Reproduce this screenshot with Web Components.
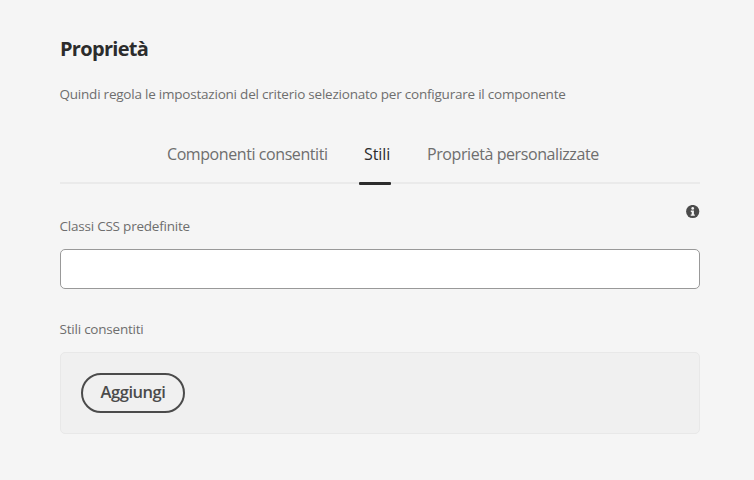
<!DOCTYPE html>
<html lang="it"><head><meta charset="utf-8"><title>Proprietà</title>
<style>html,body{margin:0;background:#f5f5f5}body{font-family:"Open Sans","Noto Sans",sans-serif;color:#6e6e6e}</style></head>
<body>
<policy-panel>
  <span slot="title">Proprietà</span>
  <span slot="description">Quindi regola le impostazioni del criterio selezionato per configurare il componente</span>
  <tab-bar slot="tabs">
    <tab-item style="--w:161px">Componenti consentiti</tab-item>
    <tab-item selected style="--w:27px">Stili</tab-item>
    <tab-item style="--w:172px">Proprietà personalizzate</tab-item>
  </tab-bar>
  <info-icon slot="info"></info-icon>
  <form-field label="Classi CSS predefinite"><text-input></text-input></form-field>
  <form-field label="Stili consentiti"><style-well><pill-button>Aggiungi</pill-button></style-well></form-field>
</policy-panel>
<script>
function define(name, html) {
  const t = document.createElement('template');
  t.innerHTML = html;
  customElements.define(name, class extends HTMLElement {
    connectedCallback() {
      if (this.shadowRoot) return;
      const root = this.attachShadow({mode: 'open'});
      root.append(t.content.cloneNode(true));
      const label = root.querySelector('[data-label]');
      if (label) label.textContent = this.getAttribute('label');
    }
  });
}
define('policy-panel', `<style>
:host{display:flex;flex-direction:column;box-sizing:border-box;width:754px;height:480px;padding:35px 54px 0 60px}
h1{margin:0;height:28px;font-size:20px;line-height:28px;font-weight:700;letter-spacing:-.7px;color:#2c2c2c;white-space:nowrap}
p{margin:21px 0 0 -.5px;height:20px;font-size:13.5px;line-height:20px;letter-spacing:-.22px;white-space:nowrap}
.info{display:flex;justify-content:flex-end;height:14px;margin-top:21px}
.fields{display:flex;flex-direction:column;gap:30px;margin-top:-3px}
</style><h1><slot name="title"></slot></h1><p><slot name="description"></slot></p>
<slot name="tabs"></slot><div class="info"><slot name="info"></slot></div><div class="fields"><slot></slot></div>`);
define('tab-bar', `<style>
:host{display:flex;justify-content:center;gap:36px;box-sizing:border-box;height:48px;margin-top:32px;padding-left:6px;border-bottom:2px solid #eaeaea}
</style><slot></slot>`);
define('tab-item', `<style>
:host{display:block;position:relative;flex:none;width:var(--w);height:47px;font-size:16px;line-height:36px;letter-spacing:-.42px;white-space:nowrap}
:host([selected]){color:#2c2c2c;letter-spacing:-.1px}
:host([selected])::after{content:"";position:absolute;left:-5px;right:0;top:46px;height:3px;border-radius:1px;background:#2c2c2c}
</style><slot></slot>`);
define('info-icon', `<style>:host{display:block;width:14px;height:14px}svg{display:block}</style>
<svg width="14" height="14" viewBox="0 0 14 14"><circle cx="6.7" cy="6.5" r="6.6" fill="#4b4b4b"/><circle cx="6.7" cy="3.4" r="1.35" fill="#f5f5f5"/><path d="M4.8 5.6h3.1v3.8h.9v1.3H4.7V9.4h1V6.9h-.9z" fill="#f5f5f5"/></svg>`);
define('form-field', `<style>:host{display:block}label{display:block;height:20px;margin:0 0 13px -.5px;font-size:13.5px;line-height:20px;letter-spacing:-.22px;white-space:nowrap}</style><label data-label></label><slot></slot>`);
define('text-input', `<style>:host{display:block;box-sizing:border-box;height:40px;border:1px solid #999;border-radius:5px;background:#fff}</style>`);
define('style-well', `<style>:host{display:flex;box-sizing:border-box;height:82px;padding:20px;border:1px solid #e8e8e8;border-radius:5px;background:#f0f0f0}</style><slot></slot>`);
define('pill-button', `<style>:host{display:block;box-sizing:border-box;width:104px;height:40px;border:2px solid #4b4b4b;border-radius:20px;color:#4b4b4b;font-size:16.5px;line-height:34px;font-weight:600;letter-spacing:-.45px;text-align:center}</style><slot></slot>`);
</script></body></html>
